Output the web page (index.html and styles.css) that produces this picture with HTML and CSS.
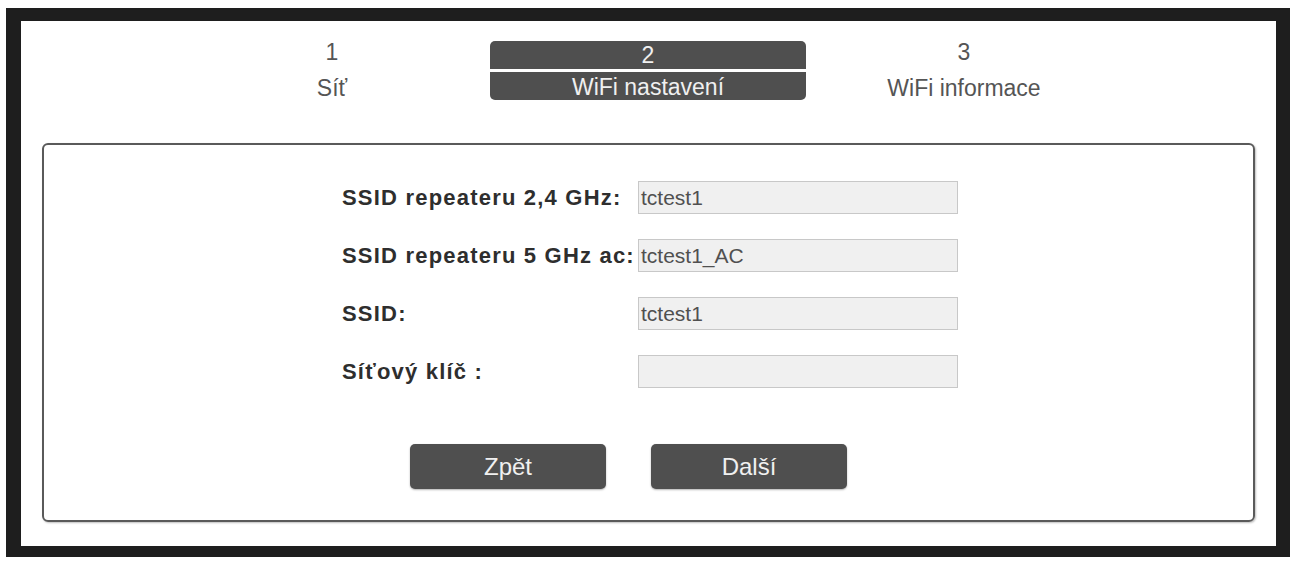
FILE: index.html
```html
<!DOCTYPE html>
<html lang="cs">
<head>
<meta charset="utf-8">
<title>WiFi nastavení</title>
<link rel="stylesheet" href="styles.css">
</head>
<body>
<div class="frame">
  <div class="steps">
    <div class="step">
      <div class="step-num">1</div>
      <div class="step-name">Síť</div>
    </div>
    <div class="step active">
      <div class="step-num">2</div>
      <div class="step-name">WiFi nastavení</div>
    </div>
    <div class="step">
      <div class="step-num">3</div>
      <div class="step-name">WiFi informace</div>
    </div>
  </div>
  <div class="panel">
    <div class="form">
      <label class="label">SSID repeateru 2,4 GHz:</label>
      <div class="input">tctest1</div>
      <label class="label">SSID repeateru 5 GHz ac:</label>
      <div class="input">tctest1_AC</div>
      <label class="label">SSID:</label>
      <div class="input">tctest1</div>
      <label class="label">Síťový klíč :</label>
      <div class="input"></div>
    </div>
    <div class="buttons">
      <button class="btn">Zpět</button>
      <button class="btn">Další</button>
    </div>
  </div>
</div>
</body>
</html>
```

FILE: styles.css
```css
html, body {
  margin: 0;
  padding: 0;
  background: #ffffff;
}
body {
  font-family: "Liberation Sans", Arial, sans-serif;
  width: 1292px;
  height: 562px;
  overflow: hidden;
}
.frame {
  margin: 8px 0 0 6px;
  width: 1255px;
  height: 525px;
  border-style: solid;
  border-color: #1e1e1e;
  border-width: 13px 14px 11px 15px;
  background: #ffffff;
  box-sizing: content-box;
  display: flex;
  flex-direction: column;
}
.steps {
  display: flex;
  justify-content: flex-start;
  padding: 20px 0 0 153px;
  height: 82px;
  box-sizing: border-box;
}
.step {
  width: 316px;
  text-align: center;
  color: #555;
  font-size: 23px;
}
.step-num {
  height: 28px;
  line-height: 22px;
}
.step-name {
  height: 30px;
  line-height: 38px;
}
.step.active {
  color: #f0f0f0;
}
.step.active .step-num {
  background: #4f4f4f;
  border-radius: 5px 5px 0 0;
  margin-bottom: 3px;
  line-height: 28px;
}
.step.active .step-name {
  background: #4f4f4f;
  border-radius: 0 0 5px 5px;
  height: 28px;
  line-height: 30px;
}
.panel {
  margin: 40px 21px 24px 21px;
  flex: 1;
  border: 2px solid #5a5a5a;
  border-radius: 6px;
  box-shadow: 1px 1px 2px rgba(0,0,0,0.25);
  display: flex;
  flex-direction: column;
  align-items: center;
}
.form {
  margin-top: 36px;
  margin-left: 3px;
  display: grid;
  grid-template-columns: 296px 320px;
  row-gap: 25px;
  align-items: center;
}
.label {
  font-weight: bold;
  font-size: 22px;
  color: #2e2e2e;
  letter-spacing: 1.2px;
  line-height: 33px;
  white-space: nowrap;
}
.input {
  height: 33px;
  box-sizing: border-box;
  background: #f0f0f0;
  border: 1px solid #c8c8c8;
  color: #505050;
  font-size: 21px;
  line-height: 31px;
  padding-left: 2px;
}
.buttons {
  margin-top: 56px;
  display: flex;
  gap: 45px;
  margin-right: 40px;
}
.btn {
  width: 196px;
  height: 45px;
  border: none;
  border-radius: 5px;
  background: #4f4f4f;
  color: #f0f0f0;
  font-family: "Liberation Sans", Arial, sans-serif;
  font-size: 24px;
  box-shadow: 0 1px 2px rgba(0,0,0,0.3);
}
```
